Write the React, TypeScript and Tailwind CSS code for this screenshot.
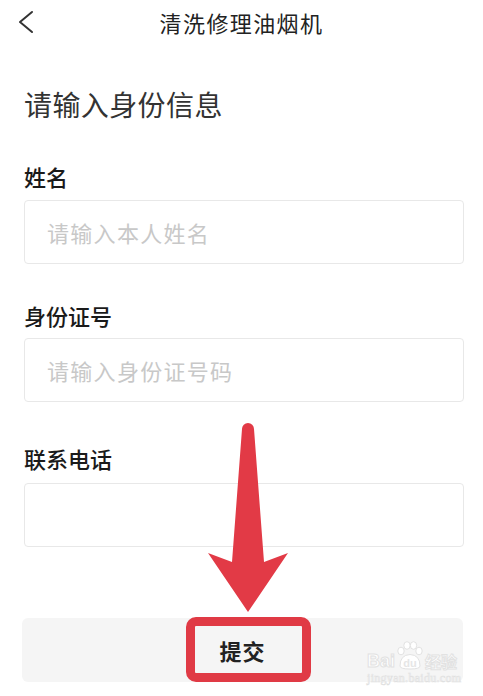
import React from 'react';

const Field = ({ label, placeholder, labelTop, inputTop }: { label: string; placeholder: string; labelTop: string; inputTop: string }) => (
  <div>
    <div className={`${labelTop} text-[22px] leading-[22px] font-medium text-[#1a1a1a]`}>{label}</div>
    <input
      className={`${inputTop} block w-[440px] h-[64px] border border-[#e8e8e8] rounded-[4px] pl-[22px] text-[22px] tracking-[1.3px] text-[#333] outline-none placeholder:text-[#c8c8c8]`}
      placeholder={placeholder}
    />
  </div>
);

const App = () => {
  return (
    <div className="relative w-[483px] h-[696px] overflow-hidden bg-white font-['Noto_Sans_CJK_SC','Noto_Sans',sans-serif]">
      {/* header */}
      <div className="grid grid-cols-[1fr_auto_1fr] items-center h-[44px]">
        <div className="pl-[18px]">
          <svg width="16" height="24" viewBox="0 0 16 24">
            <path d="M14 2 L2 12 L14 22" fill="none" stroke="#333" strokeWidth="2" strokeLinecap="round" strokeLinejoin="round" />
          </svg>
        </div>
        <div className="text-[22px] leading-[22px] tracking-[1.4px] text-[#222]">清洗修理油烟机</div>
        <div />
      </div>

      <div className="pl-6 pr-[19px]">
        <h1 className="mt-[46px] text-[28px] leading-[28px] tracking-[0.4px] text-[#333]">请输入身份信息</h1>

        <Field label="姓名" placeholder="请输入本人姓名" labelTop="mt-[47px]" inputTop="mt-[13px]" />
        <Field label="身份证号" placeholder="请输入身份证号码" labelTop="mt-[40px]" inputTop="mt-[12px]" />
        <Field label="联系电话" placeholder="" labelTop="mt-[45px]" inputTop="mt-[14px]" />

        <button className="relative mt-[71px] -ml-[2px] flex items-center justify-center w-[441px] h-[64px] rounded-[6px] bg-[#f5f5f5]">
          <span className="text-[22px] font-bold tracking-[1px] text-[#222]">提交</span>
          <span className="absolute left-[164px] -top-[1px] w-[125px] h-[65px] border-[9px] border-[#e03a45] rounded-[10px]" />
          {/* watermark */}
          <span className="absolute left-[345px] top-[23px] flex flex-col items-start">
            <span className="flex items-end gap-[1px] text-[18px] leading-[16px] font-bold font-['Liberation_Sans',sans-serif] text-white [-webkit-text-stroke:1px_#e2e2e2]">
              <span>Bai</span>
              <svg width="28" height="29" viewBox="0 0 28 29" className="-mb-[1px]">
                <g fill="white" stroke="#e2e2e2" strokeWidth="1">
                  <ellipse cx="5" cy="10" rx="3.2" ry="3.8" />
                  <ellipse cx="11" cy="4.5" rx="3.2" ry="3.8" />
                  <ellipse cx="17.5" cy="4.5" rx="3.2" ry="3.8" />
                  <ellipse cx="23" cy="10" rx="3.2" ry="3.8" />
                  <path d="M4 25 Q4 14 14 13.5 Q24 14 24 25 Q24 28 14 28 Q4 28 4 25 Z" />
                </g>
                <text x="14" y="26" textAnchor="middle" fontSize="11" fontWeight="bold" fill="#e6e6e6" fontFamily="Liberation Sans">du</text>
              </svg>
              <span className="font-['Noto_Sans_CJK_SC',sans-serif] text-[16px]">经验</span>
            </span>
            <span className="mt-[3px] text-[12px] leading-[12px] tracking-[0.3px] font-['Liberation_Serif',serif] text-white [-webkit-text-stroke:0.6px_#e0e0e0]">jingyan.baidu.com</span>
          </span>
        </button>
      </div>

      {/* annotation arrow */}
      <svg className="absolute left-0 top-0 pointer-events-none" width="483" height="696" viewBox="0 0 483 696">
        <path
          d="M242 429 A6 6 0 0 1 254 429 L264 562 L288 553 L248 612 L208 553 L232 562 Z"
          fill="#e23a46"
        />
      </svg>
    </div>
  );
};

export default App;
